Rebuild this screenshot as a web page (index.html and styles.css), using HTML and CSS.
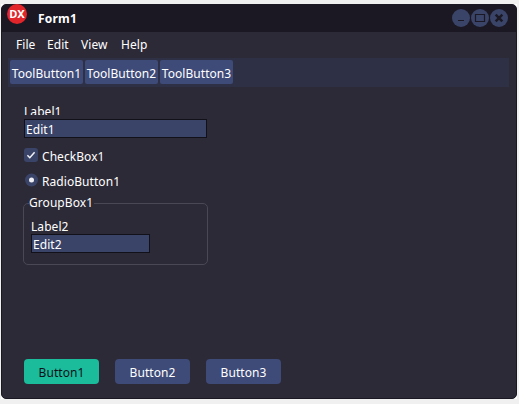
FILE: index.html
```html
<!DOCTYPE html>
<html lang="en">
<head>
<meta charset="utf-8">
<title>Form1</title>
<link rel="stylesheet" href="styles.css">
</head>
<body>
<div class="frame">
<div class="window">
  <header class="titlebar">
    <svg class="logo" width="20" height="20" viewBox="0 0 20 20"><circle cx="10" cy="10" r="10" fill="#e1252b"/><text x="10" y="13.8" text-anchor="middle" textLength="15.5" lengthAdjust="spacingAndGlyphs">DX</text></svg>
    <h1>Form1</h1>
    <div class="controls">
      <svg width="18" height="18" viewBox="0 0 18 18"><circle cx="9" cy="9" r="9"/><path d="M6 11.5h6" stroke-width="1"/></svg>
      <svg width="18" height="18" viewBox="0 0 18 18"><circle cx="9" cy="9" r="9"/><path d="M4 5.5h10M4.5 5v8M13.5 5v8M4 12.5h10" stroke-width="1.2"/></svg>
      <svg width="18" height="18" viewBox="0 0 18 18"><circle cx="9" cy="9" r="9"/><path d="M5.7 5.7l6.6 6.6M12.3 5.7l-6.6 6.6" stroke-width="2.5"/></svg>
    </div>
  </header>
  <nav class="menu"><span class="m1">File</span><span class="m2">Edit</span><span class="m3">View</span><span>Help</span></nav>
  <div class="toolbar"><button>ToolButton1</button><button>ToolButton2</button><button>ToolButton3</button></div>
  <main>
    <div class="label clipped">Label1</div>
    <div class="edit wide">Edit1</div>
    <div class="option"><svg width="14" height="14" viewBox="0 0 14 14"><rect width="14" height="14" rx="3" fill="#3a4468"/><path d="M3.4 7.2l2.4 2.5 4.8-5.5" fill="none" stroke="#f2f2f6" stroke-width="1.5"/></svg><span>CheckBox1</span></div>
    <div class="option radio"><svg width="14" height="14" viewBox="0 0 14 14"><circle cx="7.5" cy="7" r="6.5" fill="#3a4468"/><circle cx="7.5" cy="7" r="2.5" fill="#f0f0f4"/></svg><span>RadioButton1</span></div>
    <fieldset>
      <legend>GroupBox1</legend>
      <div class="label inner">Label2</div>
      <div class="edit">Edit2</div>
    </fieldset>
    <div class="actions"><button class="primary">Button1</button><button>Button2</button><button>Button3</button></div>
  </main>
</div>
</div>
</body>
</html>
```
FILE: styles.css
```css
* { box-sizing: border-box; }
body {
  margin: 0;
  padding: 4px 0 0 1px;
  height: 404px;
  overflow: hidden;
  background: #f0f0f0;
  font: 12px/16px "Noto Sans", "Open Sans", sans-serif;
  letter-spacing: 0.06px;
  color: #fff;
  white-space: nowrap;
}
button { border: 0; padding: 0; font: inherit; letter-spacing: inherit; color: inherit; background: #3e4a78; }
.frame { width: 516px; height: 395px; background: #fff; }
.window {
  height: 395px;
  background: #2d2a37;
  border: 1px solid #1b1824;
  border-radius: 5px;
}
.titlebar {
  display: flex;
  height: 27px;
  padding-left: 5px;
  background: #1b1824;
  border-radius: 4px 4px 0 0;
}
.logo { margin-top: -1px; flex: none; }
.logo text { font: bold 11px "Noto Sans", sans-serif; fill: #fff; }
h1 { margin: 6px 0 0 11px; font-size: 12px; line-height: 16px; font-weight: bold; letter-spacing: 0.2px; }
.controls { display: flex; gap: 1px; margin: 4px 8px 0 auto; }
.controls circle { fill: #3a4468; }
.controls path { fill: none; stroke: #1b1824; }
.menu { display: flex; height: 26px; padding: 5px 0 0 14px; }
.m1 { width: 31px; }
.m2 { width: 34px; }
.m3 { width: 40px; }
.toolbar {
  display: flex;
  gap: 2px;
  width: 501px;
  height: 29px;
  margin-left: 6px;
  padding: 2px;
  background: #2e3146;
}
.toolbar button { width: 73px; height: 24px; border-radius: 2px; padding-top: 3px; }
main { padding: 16px 0 0 22px; }
.label { height: 16px; }
.clipped { height: 12px; line-height: 18px; overflow: hidden; }
.edit {
  width: 119px;
  height: 19px;
  padding: 1px 0 0 1px;
  border: 1px solid #121018;
  background: #3a4468;
}
.edit.wide { width: 183px; margin-top: 3px; padding-top: 2px; line-height: 16px; }
.clipped + .edit { margin-top: 4px; }
.inner { height: 15px; }
.inner + .edit { padding-top: 2px; }
.option { display: flex; gap: 4px; height: 16px; margin-top: 10px; }
.option svg { flex: none; }
.option span { margin-top: 1px; }
.radio { margin-top: 9px; }
fieldset {
  width: 185px;
  height: 70px;
  margin: 6px 0 0 -1px;
  padding: 8px 0 0 7px;
  border: 1px solid #4b4856;
  border-radius: 5px;
}
legend { height: 16px; margin-left: -2px; padding: 0 1px 0 0; }
.actions { display: flex; gap: 16px; margin-top: 94px; }
.actions button { width: 75px; height: 25px; border-radius: 4px; padding-top: 2px; }
.actions .primary { background: #1abc9c; color: #101018; }
```
